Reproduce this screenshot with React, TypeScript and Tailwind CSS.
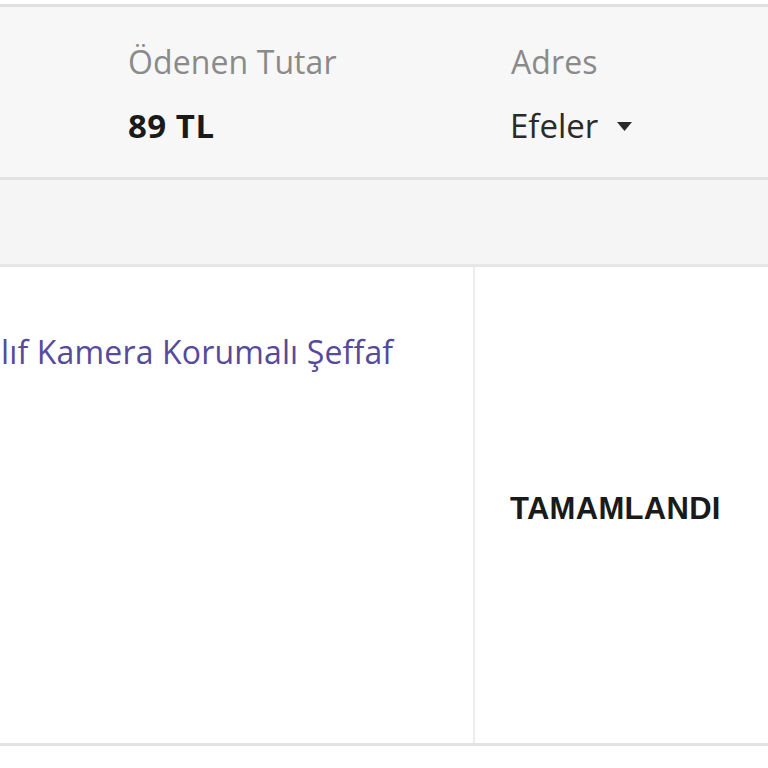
export default function App() {
  const sans = { fontFamily: '"Open Sans", "Noto Sans", sans-serif' };
  return (
    <div className="w-[768px] h-[768px] bg-white overflow-hidden" style={sans}>
      <div className="h-[4px] bg-white" />
      <div className="border-t-[3px] border-[#e0e0e0] bg-[#f7f7f7] h-[173px] flex">
        <div className="w-[511px] pl-[128px] pt-[36px] flex flex-col">
          <div className="text-[32px] leading-[38px] text-[#8a8a8a] tracking-[0.1px]">Ödenen Tutar</div>
          <div className="text-[33px] leading-[38px] mt-[26px] font-bold text-[#1a1a1a] tracking-[0.5px]">89 TL</div>
        </div>
        <div className="pt-[36px] flex flex-col">
          <div className="text-[32px] leading-[38px] text-[#8a8a8a] tracking-[0.1px]">Adres</div>
          <div className="mt-[26px] flex items-center gap-[19px] text-[33px] leading-[38px] text-[#2a2a2a] -ml-[1px]">
            <span>Efeler</span>
            <svg width="15" height="9" viewBox="0 0 15 9"><path d="M0 0 L15 0 L7.5 9 Z" fill="#2a2a2a" /></svg>
          </div>
        </div>
      </div>
      <div className="border-t-[3px] border-[#e2e2e2] bg-[#f5f5f5] h-[87px]" />
      <div className="border-t-[3px] border-[#e6e6e6] border-b-[3px] border-b-[#e2e2e2] h-[482px] flex">
        <div className="w-[475px] shrink-0 border-r-[2px] border-[#ececec] pl-[1px] pt-[64px]">
          <div className="whitespace-nowrap text-[32px] leading-[42px] text-[#564a9c] tracking-[0.15px]">lıf Kamera Korumalı Şeffaf</div>
        </div>
        <div className="flex-1 flex items-center pl-[35px] pt-[8px]">
          <div className="text-[31px] font-bold text-[#1a1a1a] tracking-[0.3px]" style={{ fontFamily: '"Liberation Sans", Arial, sans-serif' }}>TAMAMLANDI</div>
        </div>
      </div>
    </div>
  );
}
